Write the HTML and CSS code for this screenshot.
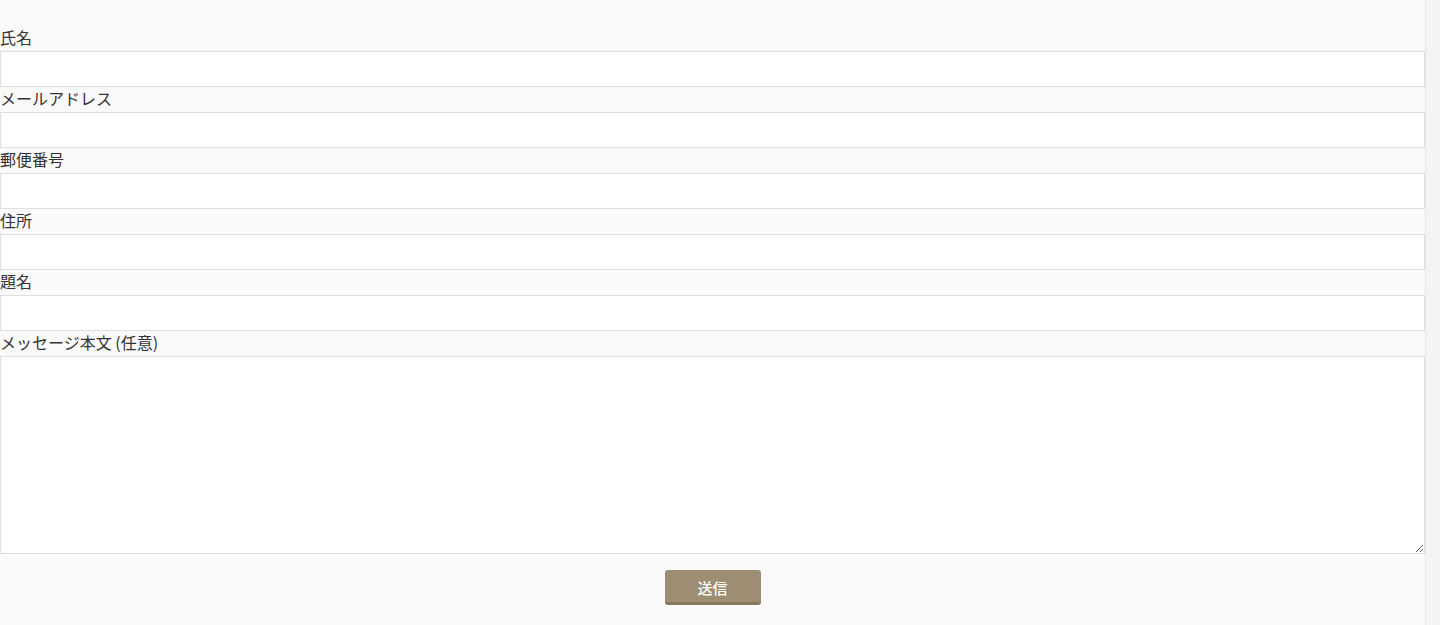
FILE: index.html
```html
<!DOCTYPE html>
<html lang="ja">
<head>
<meta charset="utf-8">
<title>お問い合わせ</title>
<link rel="stylesheet" href="styles.css">
</head>
<body>
<div class="page">
  <main class="main">
    <form class="form">
      <div class="field">
        <label class="label" for="name">氏名</label>
        <input class="input" id="name" type="text">
      </div>
      <div class="field">
        <label class="label" for="email">メールアドレス</label>
        <input class="input" id="email" type="email">
      </div>
      <div class="field">
        <label class="label" for="zip">郵便番号</label>
        <input class="input" id="zip" type="text">
      </div>
      <div class="field">
        <label class="label" for="addr">住所</label>
        <input class="input" id="addr" type="text">
      </div>
      <div class="field">
        <label class="label" for="subject">題名</label>
        <input class="input" id="subject" type="text">
      </div>
      <div class="field">
        <label class="label" for="msg">メッセージ本文 (任意)</label>
        <textarea class="textarea" id="msg"></textarea>
      </div>
      <div class="actions">
        <button class="submit" type="button">送信</button>
      </div>
    </form>
  </main>
  <div class="scrolltrack"></div>
</div>
</body>
</html>
```

FILE: styles.css
```css
* { box-sizing: border-box; }
html, body {
  margin: 0;
  padding: 0;
  height: 100%;
  overflow: hidden;
}
body {
  background: #fafafa;
  font-family: "Noto Sans CJK JP", "Noto Sans", sans-serif;
  color: #333;
}
.page {
  display: flex;
  height: 625px;
}
.main {
  flex: 1;
  padding-top: 26px;
}
.form {
  display: flex;
  flex-direction: column;
}
.field {
  display: flex;
  flex-direction: column;
}
.label {
  display: block;
  font-size: 16px;
  line-height: 22px;
  height: 25px;
  color: #333;
}
.input, .textarea {
  display: block;
  width: 100%;
  margin: 0;
  border: 1px solid #dedee3;
  background: #fff;
  font: inherit;
  outline: none;
}
.input { height: 36px; }
.textarea {
  height: 198px;
  resize: vertical;
}
.actions {
  display: flex;
  justify-content: center;
  padding-top: 16px;
}
.submit {
  width: 96px;
  height: 35px;
  border: none;
  border-bottom: 3px solid #85785f;
  border-radius: 3px;
  background: #9d8d72;
  color: #fff;
  font-family: "Noto Sans CJK JP", sans-serif;
  font-size: 15px;
  font-weight: 500;
  padding: 0;
  padding-top: 2px;
}
.scrolltrack {
  width: 15px;
  flex: none;
  background: #f4f4f4;
  border-left: 1px solid #e8e8e8;
}
```
